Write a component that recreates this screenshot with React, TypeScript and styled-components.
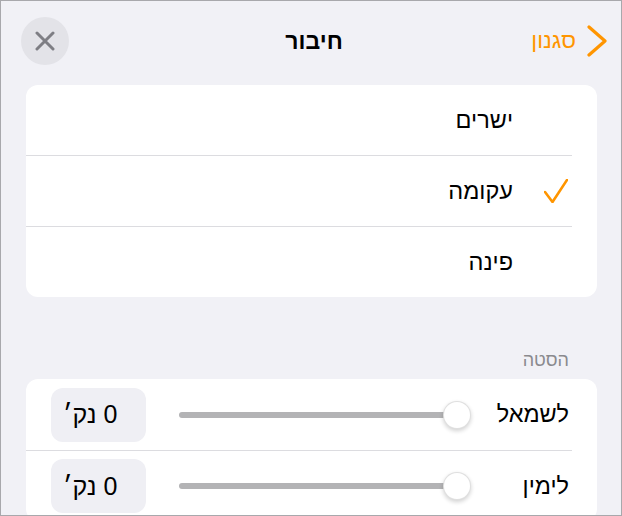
import React from "react";
import styled, { createGlobalStyle } from "styled-components";

const Global = createGlobalStyle`
  html, body { margin: 0; padding: 0; background: #f1f1f6; }
  body { font-family: "Liberation Sans", Arial, sans-serif; }
  * { box-sizing: border-box; }
`;

const Frame = styled.div`
  width: 622px;
  height: 516px;
  overflow: hidden;
  background: #f1f1f6;
  border: 1px solid #a8a8ac;
  direction: rtl;
  font-family: "Liberation Sans", Arial, sans-serif;
  color: #000;
`;

const Header = styled.header`
  display: grid;
  grid-template-columns: 1fr auto 1fr;
  align-items: center;
  height: 84px;
  padding: 16px 14px 20px 20px;
`;

const BackButton = styled.button`
  justify-self: start;
  display: flex;
  align-items: center;
  gap: 11px;
  background: none;
  border: none;
  padding: 0;
  color: #ff9500;
  font-family: inherit;
  font-size: 22.5px;
`;

const Title = styled.h1`
  margin: 0;
  font-size: 23px;
  font-weight: 700;
`;

const CloseButton = styled.button`
  justify-self: end;
  width: 48px;
  height: 48px;
  border-radius: 50%;
  border: none;
  padding: 0;
  background: #e3e3e8;
  display: flex;
  align-items: center;
  justify-content: center;
`;

const Card = styled.section`
  margin: 0 24px 0 25px;
  background: #fff;
  border-radius: 12px;
  overflow: hidden;
`;

const OptionRow = styled.div<{ $last?: boolean }>`
  margin-right: 25px;
  height: ${(p) => (p.$last ? 70 : 71)}px;
  border-bottom: ${(p) => (p.$last ? "none" : "1px solid #dcdce0")};
  display: flex;
  align-items: center;
  padding-right: 4px;
  gap: 31px;
`;

const CheckSlot = styled.div`
  width: 24px;
  height: 24px;
  display: flex;
  align-items: center;
  justify-content: center;
`;

const OptionLabel = styled.span`
  font-size: 23.5px;
`;

const SectionHeader = styled.div`
  padding: 53px 52px 9px 0;
  font-size: 18px;
  line-height: 20px;
  color: #8a8a8e;
`;

const SliderRow = styled.div<{ $last?: boolean }>`
  height: ${(p) => (p.$last ? 70 : 71)}px;
  display: flex;
  align-items: center;
  padding: 0 28px 0 25px;
`;

const SliderLabel = styled.span`
  width: 72px;
  font-size: 23.5px;
  margin-left: 26px;
  white-space: nowrap;
`;

const Slider = styled.div`
  flex: 1;
  position: relative;
  height: 28px;
  display: flex;
  align-items: center;
  margin-left: 33px;
`;

const Track = styled.div`
  flex: 1;
  height: 6px;
  margin-right: 14px;
  border-radius: 3px;
  background: #b3b3b5;
`;

const Thumb = styled.div`
  position: absolute;
  right: 0;
  top: 0;
  width: 28px;
  height: 28px;
  border-radius: 50%;
  background: #fff;
  border: 0.5px solid rgba(0, 0, 0, 0.12);
  box-shadow: 0 2px 4px rgba(0, 0, 0, 0.18);
`;

const ValueBox = styled.div`
  width: 95px;
  height: 54px;
  border-radius: 12px;
  background: #efeff4;
  display: flex;
  align-items: center;
  justify-content: flex-end;
  padding-left: 12px;
  font-size: 25px;
  white-space: nowrap;
`;

const Divider = styled.div`
  height: 1px;
  margin-right: 25px;
  background: #dcdce0;
`;

const Chevron = () => (
  <svg width="20" height="32" viewBox="0 0 20 32" fill="none">
    <path d="M2 2 L18 16 L2 30" stroke="#ff9500" strokeWidth="3.2" strokeLinecap="round" strokeLinejoin="round" />
  </svg>
);

const XIcon = () => (
  <svg width="20" height="20" viewBox="0 0 20 20" fill="none">
    <path d="M2 2 L18 18 M18 2 L2 18" stroke="#7e7e84" strokeWidth="3" strokeLinecap="round" />
  </svg>
);

const Check = () => (
  <svg width="24" height="24" viewBox="0 0 24 24" fill="none">
    <path d="M1 13 L8.5 23 L23 1" stroke="#ff9500" strokeWidth="2.6" strokeLinecap="round" strokeLinejoin="round" />
  </svg>
);

const options = [
  { label: "ישרים", checked: false },
  { label: "עקומה", checked: true },
  { label: "פינה", checked: false },
];

const sliders = ["לשמאל", "לימין"];

export default function App() {
  return (
    <>
      <Global />
      <Frame>
        <Header>
          <BackButton>
            <Chevron />
            סגנון
          </BackButton>
          <Title>חיבור</Title>
          <CloseButton aria-label="סגור">
            <XIcon />
          </CloseButton>
        </Header>
        <Card>
          {options.map((o, i) => (
            <OptionRow key={o.label} $last={i === options.length - 1}>
              <CheckSlot>{o.checked && <Check />}</CheckSlot>
              <OptionLabel>{o.label}</OptionLabel>
            </OptionRow>
          ))}
        </Card>
        <SectionHeader>הסטה</SectionHeader>
        <Card>
          {sliders.map((s, i) => (
            <React.Fragment key={s}>
              {i > 0 && <Divider />}
              <SliderRow $last={i === sliders.length - 1}>
                <SliderLabel>{s}</SliderLabel>
                <Slider>
                  <Track />
                  <Thumb />
                </Slider>
                <ValueBox>0 נק׳</ValueBox>
              </SliderRow>
            </React.Fragment>
          ))}
        </Card>
      </Frame>
    </>
  );
}
